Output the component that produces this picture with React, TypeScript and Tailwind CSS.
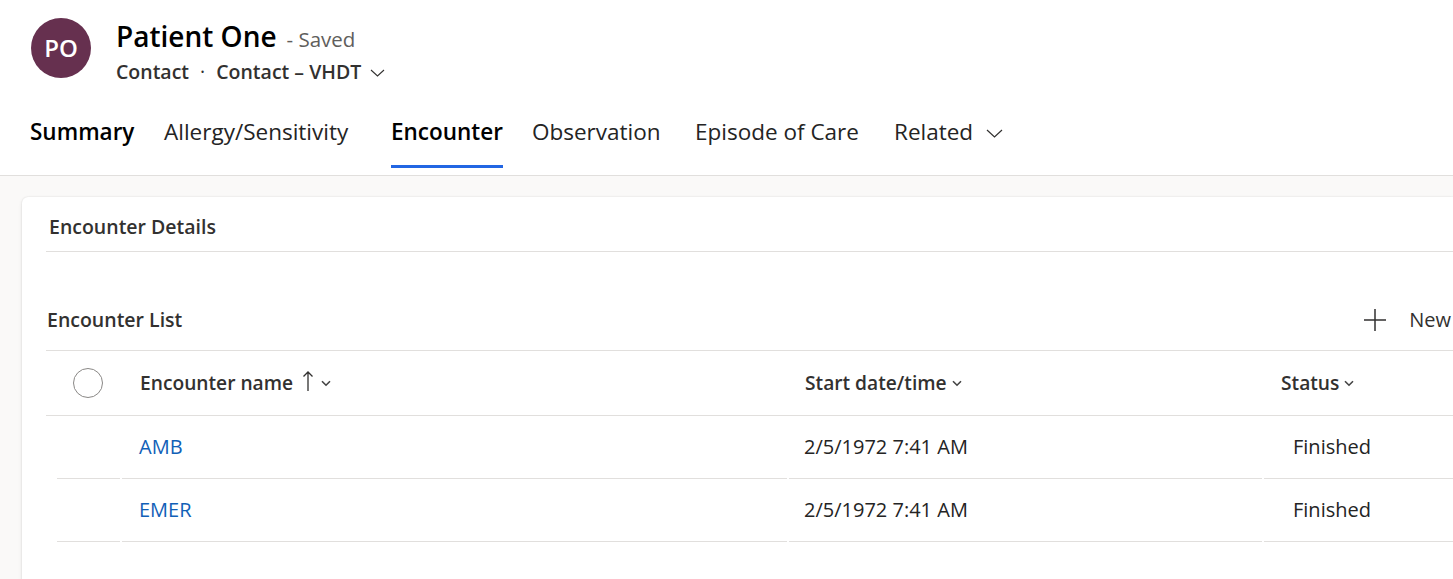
const TABS = [
  { label: "Summary", w: "w-[134px]", bold: true },
  { label: "Allergy/Sensitivity", w: "w-[227px]" },
  { label: "Encounter", w: "w-[141px]", active: true },
  { label: "Observation", w: "w-[163px]" },
  { label: "Episode of Care", w: "w-[199px]" },
];

const ROWS = [
  { name: "AMB", start: "2/5/1972 7:41 AM", status: "Finished" },
  { name: "EMER", start: "2/5/1972 7:41 AM", status: "Finished" },
];

function Chevron({ w, h, stroke = 1.2 }: { w: number; h: number; stroke?: number }) {
  return (
    <svg width={w} height={h} viewBox={`0 0 ${w} ${h}`} className="text-[#323130]">
      <path
        d={`M1 1 L${w / 2} ${h - 1} L${w - 1} 1`}
        fill="none"
        stroke="currentColor"
        strokeWidth={stroke}
      />
    </svg>
  );
}

function SortChevron() {
  return (
    <svg width="12" height="12" viewBox="0 0 12 12" className="text-[#444]">
      <path d="M2 4.2 6 8.2l4-4" fill="none" stroke="currentColor" strokeWidth="1.6" />
    </svg>
  );
}

export default function App() {
  return (
    <div
      className="h-[579px] w-[1453px] overflow-hidden bg-[#faf9f8] text-[#242424]"
      style={{ fontFamily: '"Segoe UI", "Open Sans", sans-serif' }}
    >
      {/* Record header */}
      <div className="flex h-[176px] flex-col border-b border-[#e1dfdd] bg-white">
        <div className="flex h-[100px] items-start pl-[31px] pt-[18px]">
          <div className="flex h-[60px] w-[60px] items-center justify-center rounded-full bg-[#66304f] text-[24px] font-semibold text-white">
            PO
          </div>
          <div className="-mt-[2px] ml-[25px]">
            <div className="flex items-baseline">
              <span className="text-[28px] font-semibold leading-[40px] text-black">Patient One</span>
              <span className="ml-[10px] text-[20.5px] text-[#605e5c]">- Saved</span>
            </div>
            <div className="mt-[3px] flex items-center text-[19.5px] font-semibold leading-[26px] text-[#323130]">
              <span>Contact</span>
              <span className="mx-[11px] font-normal">·</span>
              <span>Contact – VHDT</span>
              <span className="ml-[9px] mt-[1px]">
                <Chevron w={15} h={8} stroke={1.1} />
              </span>
            </div>
          </div>
        </div>

        <div className="flex h-[68px] items-stretch pl-[30px]">
          {TABS.map((t) => (
            <div key={t.label} className={`${t.w} flex items-stretch`}>
              <span
                className={`flex items-center border-b-[3px] text-[22.5px] leading-none ${
                  t.active ? "border-[#2266e3]" : "border-transparent"
                } ${t.bold || t.active ? "font-semibold text-black" : "text-[#242424]"}`}
              >
                {t.label}
              </span>
            </div>
          ))}
          <div className="flex items-center border-b-[3px] border-transparent text-[22.5px] leading-none text-[#242424]">
            <span>Related</span>
            <span className="ml-[13px] mt-[2px]">
              <Chevron w={17} h={9} stroke={1.2} />
            </span>
          </div>
        </div>
      </div>

      {/* Form card */}
      <div className="ml-[22px] mt-[21px] h-[420px] rounded-l-[6px] bg-white pl-[24px] pt-[16px] shadow-[0_0_2px_rgba(0,0,0,0.12),0_2px_4px_rgba(0,0,0,0.08)]">
        <div className="border-b border-[#e1dfdd] pb-[11px] pl-[3px] text-[19.5px] font-semibold leading-[27px] text-[#323130]">
          Encounter Details
        </div>

        <div className="mt-[55px] flex h-[26px] items-center justify-between">
          <div className="pl-[1px] text-[19.5px] font-semibold text-[#323130]">Encounter List</div>
          <div className="flex items-center pr-[2px] text-[20px] text-[#323130]">
            <svg width="24" height="24" viewBox="0 0 24 24" className="text-[#323130]">
              <path d="M12 1v22M1 12h22" stroke="currentColor" strokeWidth="1.5" />
            </svg>
            <span className="ml-[22px] whitespace-nowrap">New</span>
          </div>
        </div>

        <div className="mt-[17px] border-t border-[#e1dfdd]">
          {/* Column headers */}
          <div className="flex h-[65px] items-center border-b border-[#e1dfdd] text-[19.2px] font-semibold text-[#323130]">
            <div className="flex w-[94px] pl-[27px]">
              <div className="h-[30px] w-[30px] rounded-full border border-[#8a8886]" />
            </div>
            <div className="flex w-[665px] items-center">
              <span>Encounter name</span>
              <svg width="12" height="22" viewBox="0 0 12 22" className="ml-[9px] -mt-[4px] text-[#323130]">
                <path d="M6 21V2M1.5 6.5 6 2l4.5 4.5" fill="none" stroke="currentColor" strokeWidth="1.3" />
              </svg>
              <span className="ml-[6px]">
                <SortChevron />
              </span>
            </div>
            <div className="flex w-[476px] items-center">
              <span>Start date/time</span>
              <span className="ml-[4px]">
                <SortChevron />
              </span>
            </div>
            <div className="flex items-center">
              <span>Status</span>
              <span className="ml-[4px]">
                <SortChevron />
              </span>
            </div>
          </div>

          {/* Rows */}
          {ROWS.map((r) => (
            <div key={r.name} className="ml-[11px] flex h-[63px] items-center text-[20px]">
              <div className="h-full w-[63px] border-b border-[#e1dfdd]" />
              <div className="ml-[2px] flex h-full w-[665px] items-center border-b border-[#e1dfdd] pl-[17px] text-[#1160b7]">
                {r.name}
              </div>
              <div className="ml-[2px] flex h-full w-[473px] items-center border-b border-[#e1dfdd] pl-[15px] text-[#242424]">
                {r.start}
              </div>
              <div className="ml-[2px] flex h-full flex-1 items-center border-b border-[#e1dfdd] pl-[29px] text-[#242424]">
                {r.status}
              </div>
            </div>
          ))}
        </div>
      </div>
    </div>
  );
}
